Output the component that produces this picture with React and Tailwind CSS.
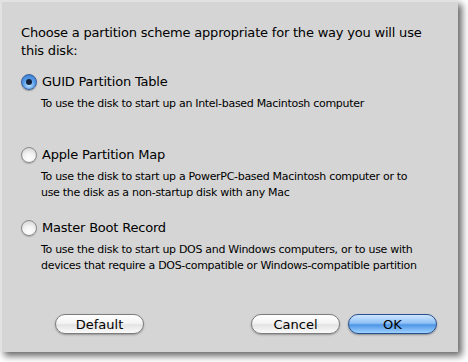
import { useState } from "react";

const options = [
  {
    id: "guid",
    label: "GUID Partition Table",
    desc: ["To use the disk to start up an Intel-based Macintosh computer"],
  },
  {
    id: "apm",
    label: "Apple Partition Map",
    desc: [
      "To use the disk to start up a PowerPC-based Macintosh computer or to",
      "use the disk as a non-startup disk with any Mac",
    ],
  },
  {
    id: "mbr",
    label: "Master Boot Record",
    desc: [
      "To use the disk to start up DOS and Windows computers, or to use with",
      "devices that require a DOS-compatible or Windows-compatible partition",
    ],
  },
];

function Radio({ checked }) {
  if (checked) {
    return (
      <span className="w-[16px] h-[16px] rounded-full border border-[#3a5f9c] bg-[radial-gradient(circle_at_50%_70%,#c6e7ff_0%,#5aa0ea_45%,#2f6fc6_100%)] shadow-[0_1px_1px_rgba(0,0,0,0.3)] flex items-center justify-center shrink-0">
        <span className="w-[6px] h-[6px] rounded-full bg-[#14213a]" />
      </span>
    );
  }
  return (
    <span className="w-[16px] h-[16px] rounded-full border border-[#8a8a8a] bg-[radial-gradient(circle_at_50%_75%,#ffffff_0%,#f2f2f2_45%,#c9c9c9_100%)] shadow-[0_1px_1px_rgba(0,0,0,0.2)] shrink-0" />
  );
}

function Button({ children, primary }) {
  const base =
    "w-[89px] h-[20px] rounded-full text-[13px] leading-none flex items-center justify-center text-black";
  if (primary) {
    return (
      <button
        className={
          base +
          " border border-[#2a4f8f] bg-[linear-gradient(to_bottom,#cfe6ff_0%,#8fc2f5_45%,#4f95e6_55%,#9fd3ff_100%)] shadow-[0_1px_2px_rgba(0,0,0,0.35)]"
        }
      >
        {children}
      </button>
    );
  }
  return (
    <button
      className={
        base +
        " border border-[#7d7d7d] bg-[linear-gradient(to_bottom,#ffffff_0%,#f4f4f4_45%,#e3e3e3_55%,#fbfbfb_100%)] shadow-[0_1px_2px_rgba(0,0,0,0.3)]"
      }
    >
      {children}
    </button>
  );
}

export default function App() {
  const [selected, setSelected] = useState("guid");

  return (
    <div className="w-[468px] h-[362px] bg-white font-['Lucida_Grande','DejaVu_Sans',sans-serif]">
      <div className="w-[458px] h-[352px] bg-[#d5d5d5] border-l-2 border-t-2 border-[#e2e2e2] shadow-[4px_4px_7px_rgba(0,0,0,0.6)] flex flex-col pl-[19px] pt-[22px] pr-[20px]">
        <p className="text-[13px] leading-[18px] text-black tracking-[-0.2px]">
          Choose a partition scheme appropriate for the way you will use this disk:
        </p>

        <div className="flex flex-col gap-[19px] mt-[13px]">
          {options.map((o) => (
            <div key={o.id} className="flex flex-col" onClick={() => setSelected(o.id)}>
              <div className="flex items-center gap-[5px] h-[18px]">
                <Radio checked={selected === o.id} />
                <span className="text-[13px] text-black tracking-[-0.2px]">{o.label}</span>
              </div>
              <div className="pl-[20px] mt-[5px] min-h-[31px] text-[11px] leading-[15.5px] text-black tracking-[-0.3px]">
                {o.desc.map((d) => (
                  <div key={d}>{d}</div>
                ))}
              </div>
            </div>
          ))}
        </div>

        <div className="mt-auto mb-[18px] flex items-center pl-[34px] pr-[1px]">
          <Button>Default</Button>
          <div className="flex-1" />
          <Button>Cancel</Button>
          <div className="w-[8px]" />
          <Button primary>OK</Button>
        </div>
      </div>
    </div>
  );
}
